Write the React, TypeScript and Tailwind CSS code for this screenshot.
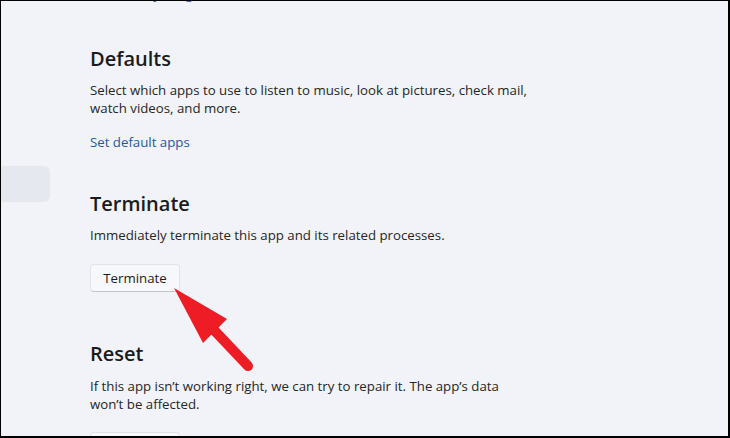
import React from 'react';

const Section: React.FC<{ title: string; className?: string; children: React.ReactNode }> = ({ title, className, children }) => (
    <section className={className}>
        <h2 className="text-[20px] leading-[28px] font-semibold text-[#1b1b1b]">{title}</h2>
        {children}
    </section>
);

const Button: React.FC<{ label: string; className?: string }> = ({ label, className }) => (
    <button className={`h-[28px] w-[90px] rounded-[4px] border border-[#e2e3e7] border-b-[#c3c4c8] bg-[#f7f8fb] text-[13.25px] text-[#1b1b1b] ${className ?? ''}`}>
        {label}
    </button>
);

export default function App() {
    return (
        <div className="relative h-[438px] w-[730px] overflow-hidden border-t border-l border-r-2 border-b-2 border-black bg-[#f1f3f8] font-['Open_Sans',sans-serif]">
            <div className="flex">
                {/* nav column */}
                <aside className="w-[89px] shrink-0 pt-[165px]">
                    <div className="h-[36px] w-[49px] rounded-r-[6px] bg-[#e5e8ee]" />
                </aside>

                <main className="-mt-[16px] w-[440px] text-[13.25px] leading-[18px] text-[#262626]">
                    <a className="block text-[#1a5aa8]">See battery usage</a>

                    <Section title="Defaults" className="mt-[42px]">
                        <p className="mt-[8px]">
                            Select which apps to use to listen to music, look at pictures, check mail, watch videos, and more.
                        </p>
                        <a className="mt-[16px] block text-[#1a5aa8]">Set default apps</a>
                    </Section>

                    <Section title="Terminate" className="mt-[39px]">
                        <p className="mt-[8px]">Immediately terminate this app and its related processes.</p>
                        <Button label="Terminate" className="mt-[20px]" />
                    </Section>

                    <Section title="Reset" className="mt-[48px]">
                        <p className="mt-[9px]">
                            If this app isn’t working right, we can try to repair it. The app’s data won’t be affected.
                        </p>
                        <Button label="Repair" className="mt-[19px]" />
                    </Section>
                </main>
            </div>

            {/* red annotation arrow */}
            <svg className="absolute left-0 top-0" width="730" height="438" viewBox="0 0 730 438">
                <polygon points="173,287 226,318 202,342" fill="#ee1c25" />
                <line x1="212" y1="328" x2="247" y2="365" stroke="#ee1c25" strokeWidth="10" strokeLinecap="round" />
            </svg>
        </div>
    );
}
